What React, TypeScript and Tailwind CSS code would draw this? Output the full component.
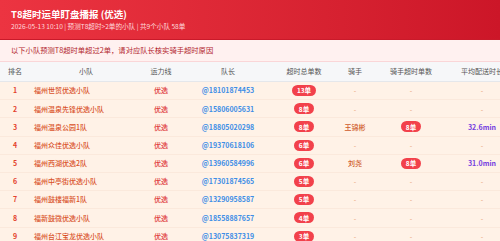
import React from "react";

type Row = {
  rank: number;
  team: string;
  line: string;
  leader: string;
  total: string;
  rider?: string;
  riderCount?: string;
  avg?: string;
};

const rows: Row[] = [
  { rank: 1, team: "福州世贸优选小队", line: "优选", leader: "@18101874453", total: "13单" },
  { rank: 2, team: "福州温泉先锋优选小队", line: "优选", leader: "@15806005631", total: "8单" },
  { rank: 3, team: "福州温泉公园1队", line: "优选", leader: "@18805020298", total: "8单", rider: "王锦彬", riderCount: "8单", avg: "32.6min" },
  { rank: 4, team: "福州众佳优选小队", line: "优选", leader: "@19370618106", total: "6单" },
  { rank: 5, team: "福州西湖优选2队", line: "优选", leader: "@13960584996", total: "6单", rider: "刘尧", riderCount: "8单", avg: "31.0min" },
  { rank: 6, team: "福州中亭街优选小队", line: "优选", leader: "@17301874565", total: "5单" },
  { rank: 7, team: "福州鼓楼福新1队", line: "优选", leader: "@13290958587", total: "5单" },
  { rank: 8, team: "福新鼓微优选小队", line: "优选", leader: "@18558887657", total: "4单" },
  { rank: 9, team: "福州台江宝龙优选小队", line: "优选", leader: "@13075837319", total: "3单" },
];

const cols = "grid grid-cols-[30px_112px_38px_96px_56px_46px_66px_76px]";

function Badge({ children }: { children: React.ReactNode }) {
  return (
    <span className="inline-flex h-[11px] items-center rounded-full bg-[#f2414b] px-[5px] text-[6.5px] font-bold leading-none text-white">
      {children}
    </span>
  );
}

function Dash() {
  return <span className="text-[7px] text-[#e79a74]">-</span>;
}

export default function App() {
  return (
    <div
      className="h-[241px] w-[500px] overflow-hidden bg-[#fff4ea]"
      style={{ fontFamily: '"Noto Sans CJK SC", "Noto Sans", sans-serif' }}
    >
      <div className="flex h-[40px] flex-col justify-center border-b border-[#c91a2a] bg-gradient-to-r from-[#ec3441] to-[#cc1628] pl-[11px]">
        <div className="text-[9.5px] font-bold leading-[13px] text-white">T8超时运单盯盘播报 (优选)</div>
        <div className="mt-[1px] text-[6.6px] leading-[9px] text-[#ffd9dc]">
          2026-05-13 10:10 | 预测T8超时&gt;2单的小队 | 共9个小队 58单
        </div>
      </div>
      <div className="flex h-[22px] items-center border-b border-[#fad6d8] bg-[#fff1f0] pl-[11px] text-[7.3px] text-[#b3262f]">
        以下小队预测T8超时单超过2单，请对应队长核实骑手超时原因
      </div>
      <div className="w-[520px]">
        <div className={`${cols} h-[20px] items-center border-b border-[#e5e7eb] bg-[#f6f7f9] text-[7px] text-[#555]`}>
          <div className="text-center">排名</div>
          <div className="text-center">小队</div>
          <div className="text-center">运力线</div>
          <div className="text-center">队长</div>
          <div className="text-center">超时总单数</div>
          <div className="text-center">骑手</div>
          <div className="text-center">骑手超时单数</div>
          <div className="text-center">平均配送时长</div>
        </div>
        {rows.map((r) => (
          <div
            key={r.rank}
            className={`${cols} h-[18.2px] items-center border-b border-[#fbe9dc] bg-[#fff2e7] text-[7px]`}
          >
            <div className="text-center font-bold text-[#e3412b]">{r.rank}</div>
            <div className="pl-[4px] font-medium text-[#d9532a]">{r.team}</div>
            <div className="text-center font-medium text-[#de3b3b]">{r.line}</div>
            <div className="text-center font-bold text-[#3e8ee6]">{r.leader}</div>
            <div className="flex justify-center">
              <Badge>{r.total}</Badge>
            </div>
            <div className="text-center">
              {r.rider ? <span className="font-medium text-[#cf5a2a]">{r.rider}</span> : <Dash />}
            </div>
            <div className="flex justify-center">
              {r.riderCount ? <Badge>{r.riderCount}</Badge> : <Dash />}
            </div>
            <div className="text-center">
              {r.avg ? <span className="font-bold text-[#7440e0]">{r.avg}</span> : <Dash />}
            </div>
          </div>
        ))}
      </div>
    </div>
  );
}
